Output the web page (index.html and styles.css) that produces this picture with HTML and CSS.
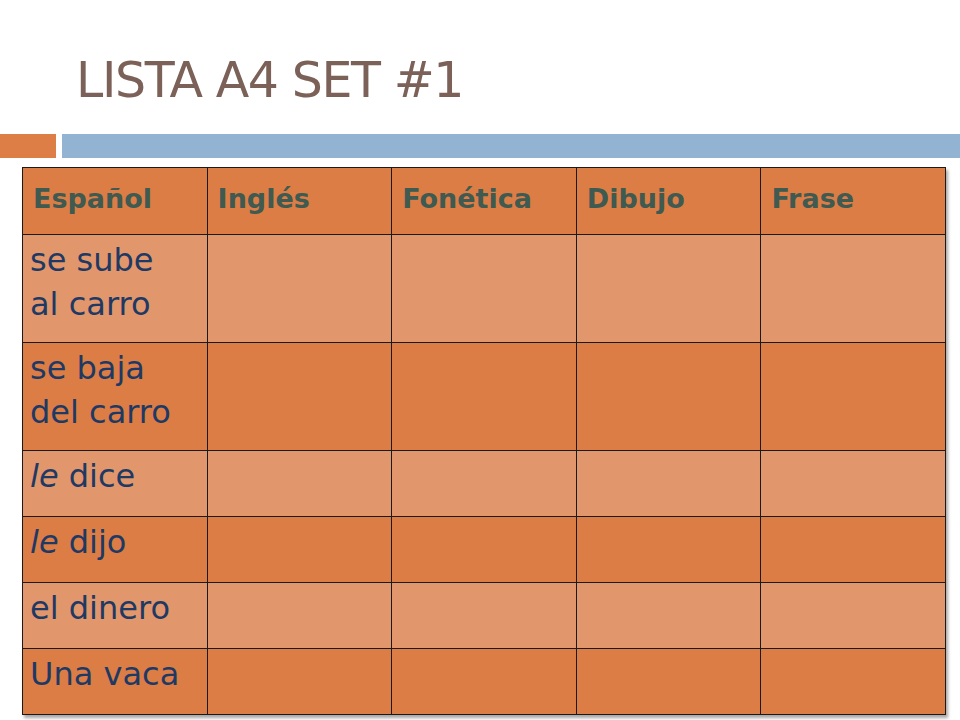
FILE: index.html
```html
<!DOCTYPE html>
<html lang="es">
<head>
<meta charset="utf-8">
<title>Lista A4 Set #1</title>
<link rel="stylesheet" href="styles.css">
</head>
<body>
<div class="slide">
  <h1 class="title">LISTA A4 SET #1</h1>
  <div class="rule">
    <div class="rule-orange"></div>
    <div class="rule-blue"></div>
  </div>
  <table class="vocab">
    <colgroup>
      <col class="c"><col class="c"><col class="c"><col class="c"><col class="c">
    </colgroup>
    <thead>
      <tr class="head">
        <th>Español</th><th>Inglés</th><th>Fonética</th><th>Dibujo</th><th>Frase</th>
      </tr>
    </thead>
    <tbody>
      <tr class="light tall"><td>se sube<br>al carro</td><td></td><td></td><td></td><td></td></tr>
      <tr class="dark tall"><td>se baja<br>del carro</td><td></td><td></td><td></td><td></td></tr>
      <tr class="light short"><td><i>le</i> dice</td><td></td><td></td><td></td><td></td></tr>
      <tr class="dark short"><td><i>le</i> dijo</td><td></td><td></td><td></td><td></td></tr>
      <tr class="light short"><td>el dinero</td><td></td><td></td><td></td><td></td></tr>
      <tr class="dark short"><td>Una vaca</td><td></td><td></td><td></td><td></td></tr>
    </tbody>
  </table>
</div>
</body>
</html>
```

FILE: styles.css
```css
* { box-sizing: border-box; }
html, body { margin: 0; padding: 0; background: #ffffff; }
.slide {
  width: 960px;
  height: 720px;
  overflow: hidden;
  display: flex;
  flex-direction: column;
}
.title {
  margin: 0;
  padding: 50px 0 0 76px;
  height: 134px;
  font-family: "DejaVu Sans", sans-serif;
  font-weight: 400;
  font-size: 49px;
  line-height: 62px;
  color: #7b6158;
  letter-spacing: -1.4px;
}
.rule {
  display: flex;
  gap: 6px;
  height: 24px;
}
.rule-orange { width: 56px; background: #dd7e47; }
.rule-blue { flex: 1; background: #93b3d2; }
.vocab {
  margin: 9px 0 0 22px;
  width: 924px;
  border-collapse: collapse;
  table-layout: fixed;
  box-shadow: 2px 3px 3px rgba(0,0,0,0.35);
}
.vocab th, .vocab td {
  border: 1.5px solid #1a1a1a;
  vertical-align: top;
  padding: 0 0 0 8px;
  text-align: left;
}
.vocab th {
  height: 67px;
  background: #dc7d46;
  color: #3e5a51;
  font-family: "DejaVu Sans", sans-serif;
  font-weight: 700;
  font-size: 27px;
  line-height: 32px;
  padding-top: 15px;
  padding-left: 10px;
}
.vocab td {
  font-family: "DejaVu Sans", sans-serif;
  font-size: 32px;
  line-height: 44px;
  color: #1e3963;
  padding-top: 3px;
  padding-left: 7px;
}
.vocab td i { font-style: italic; }
.light td { background: #e2966b; }
.dark td { background: #dc7d46; }
.tall td { height: 108px; }
.short td { height: 66px; }
```
